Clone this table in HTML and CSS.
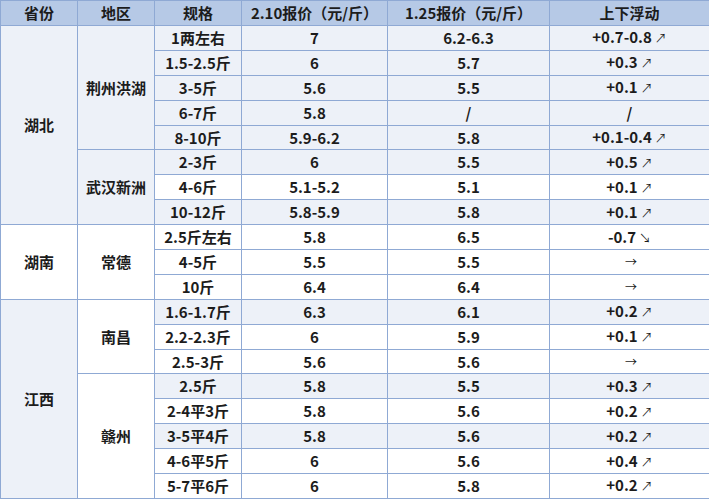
FILE: index.html
```html
<!DOCTYPE html>
<html lang="zh">
<head>
<meta charset="utf-8">
<link rel="stylesheet" href="styles.css">
</head>
<body>
<table class="price">
  <colgroup>
    <col class="c1"><col class="c2"><col class="c3"><col class="c4"><col class="c5"><col class="c6">
  </colgroup>
  <thead>
    <tr><th>省份</th><th>地区</th><th>规格</th><th>2.10报价（元/斤）</th><th>1.25报价（元/斤）</th><th>上下浮动</th></tr>
  </thead>
  <tbody>
    <tr class="lt"><td rowspan="8" class="lt">湖北</td><td rowspan="5" class="lt">荆州洪湖</td><td>1两左右</td><td>7</td><td>6.2-6.3</td><td>+0.7-0.8<span class="ar">↗</span></td></tr>
    <tr class="lt"><td>1.5-2.5斤</td><td>6</td><td>5.7</td><td>+0.3<span class="ar">↗</span></td></tr>
    <tr class="lt"><td>3-5斤</td><td>5.6</td><td>5.5</td><td>+0.1<span class="ar">↗</span></td></tr>
    <tr class="lt"><td>6-7斤</td><td>5.8</td><td>/</td><td>/</td></tr>
    <tr class="lt"><td>8-10斤</td><td>5.9-6.2</td><td>5.8</td><td>+0.1-0.4<span class="ar">↗</span></td></tr>
    <tr class="lt"><td rowspan="3" class="lt">武汉新洲</td><td>2-3斤</td><td>6</td><td>5.5</td><td>+0.5<span class="ar">↗</span></td></tr>
    <tr class="wh"><td>4-6斤</td><td>5.1-5.2</td><td>5.1</td><td>+0.1<span class="ar">↗</span></td></tr>
    <tr class="lt"><td>10-12斤</td><td>5.8-5.9</td><td>5.8</td><td>+0.1<span class="ar">↗</span></td></tr>
    <tr class="wh"><td rowspan="3" class="wh">湖南</td><td rowspan="3" class="wh">常德</td><td>2.5斤左右</td><td>5.8</td><td>6.5</td><td>-0.7<span class="ar">↘</span></td></tr>
    <tr class="wh"><td>4-5斤</td><td>5.5</td><td>5.5</td><td><span class="ar">→</span></td></tr>
    <tr class="wh"><td>10斤</td><td>6.4</td><td>6.4</td><td><span class="ar">→</span></td></tr>
    <tr class="lt"><td rowspan="8" class="lt">江西</td><td rowspan="3" class="wh">南昌</td><td>1.6-1.7斤</td><td>6.3</td><td>6.1</td><td>+0.2<span class="ar">↗</span></td></tr>
    <tr class="wh"><td>2.2-2.3斤</td><td>6</td><td>5.9</td><td>+0.1<span class="ar">↗</span></td></tr>
    <tr class="wh"><td>2.5-3斤</td><td>5.6</td><td>5.6</td><td><span class="ar">→</span></td></tr>
    <tr class="lt"><td rowspan="5" class="wh">赣州</td><td>2.5斤</td><td>5.8</td><td>5.5</td><td>+0.3<span class="ar">↗</span></td></tr>
    <tr class="wh"><td>2-4平3斤</td><td>5.8</td><td>5.6</td><td>+0.2<span class="ar">↗</span></td></tr>
    <tr class="lt"><td>3-5平4斤</td><td>5.8</td><td>5.6</td><td>+0.2<span class="ar">↗</span></td></tr>
    <tr class="wh"><td>4-6平5斤</td><td>6</td><td>5.6</td><td>+0.4<span class="ar">↗</span></td></tr>
    <tr class="wh"><td>5-7平6斤</td><td>6</td><td>5.8</td><td>+0.2<span class="ar">↗</span></td></tr>
  </tbody>
</table>
</body>
</html>
```
FILE: styles.css
```css
html, body {
  margin: 0;
  padding: 0;
  background: #ffffff;
}
.price {
  width: 709px;
  table-layout: fixed;
  border-collapse: collapse;
  font-family: "Noto Sans CJK SC", "Noto Sans", sans-serif;
  font-weight: 700;
  font-size: 15px;
  color: #1c1c1c;
}
.c1 { width: 77px; }
.c2 { width: 77px; }
.c3 { width: 87px; }
.c4 { width: 146px; }
.c5 { width: 162px; }
.c6 { width: 160px; }
.price th, .price td {
  border: 1px solid #8fa9d4;
  padding: 0;
  text-align: center;
  vertical-align: middle;
  line-height: 18px;
  white-space: nowrap;
}
.price thead tr {
  height: 25px;
}
.price th {
  background: #b6c9e6;
  font-weight: 700;
}
.price tbody tr {
  height: 24.9px;
}
.price tr.lt td { background: #edf1f8; }
.price tr.wh td { background: #ffffff; }
.price tr td.lt { background: #edf1f8; }
.price tr td.wh { background: #ffffff; }
.ar {
  font-weight: 400;
  font-size: 12px;
  margin-left: 3px;
}
```
